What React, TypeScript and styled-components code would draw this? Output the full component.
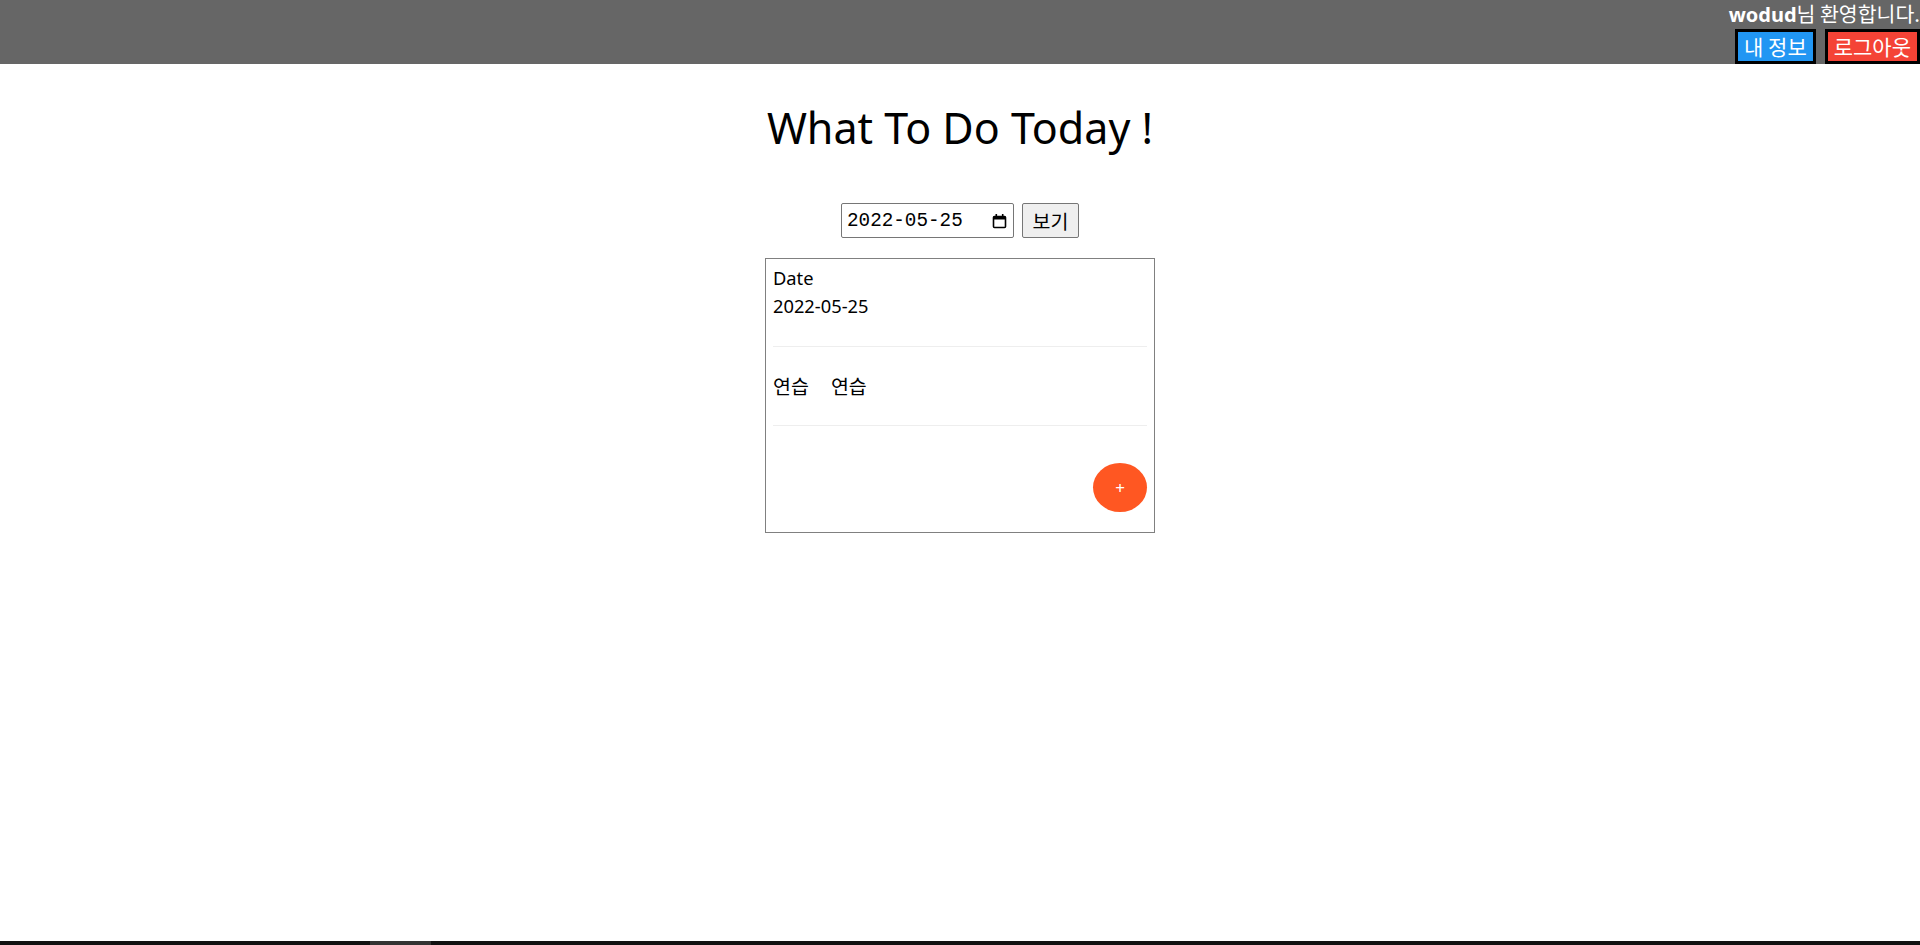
import React from "react";
import styled, { createGlobalStyle } from "styled-components";

const Global = createGlobalStyle`
  html, body { margin: 0; padding: 0; background: #fff; }
  body { font-family: "Noto Sans", "Noto Sans CJK KR", sans-serif; color: #000; }
  * { box-sizing: border-box; }
`;

const Page = styled.div`
  min-height: 945px;
  display: flex;
  flex-direction: column;
`;

const Header = styled.header`
  height: 64px;
  background: #666666;
  display: flex;
  flex-direction: column;
  align-items: flex-end;
`;

const Welcome = styled.div`
  color: #fff;
  font-size: 20.5px;
  line-height: 26px;
  height: 29px;
  white-space: nowrap;
  font-family: "Noto Sans CJK KR", sans-serif;
  b { font-family: "Noto Sans", sans-serif; font-weight: 700; font-size: 20px; }
`;

const HeaderActions = styled.div`
  display: flex;
  gap: 9px;
`;

const HeaderButton = styled.button<{ $bg: string }>`
  height: 35px;
  padding: 0 6px;
  border: 3px solid #000;
  background: ${(p) => p.$bg};
  color: #fff;
  font-family: "Noto Sans CJK KR", sans-serif;
  font-size: 21px;
  line-height: 1;
  cursor: pointer;
`;

const Main = styled.main`
  display: flex;
  flex-direction: column;
  align-items: center;
`;

const Title = styled.h1`
  margin: 34px 0 0;
  font-weight: 400;
  font-size: 43px;
  line-height: 60px;
  font-family: "Noto Sans", "Noto Sans CJK KR", sans-serif;
`;

const SearchRow = styled.form`
  margin-top: 45px;
  display: flex;
  gap: 8px;
  align-items: center;
`;

const DateField = styled.label`
  width: 173px;
  height: 35px;
  border: 1px solid #767676;
  border-radius: 2px;
  padding: 0 6px 0 5px;
  display: flex;
  align-items: center;
  justify-content: space-between;
  background: #fff;
`;

const DateText = styled.input`
  width: 125px;
  border: none;
  outline: none;
  padding: 0;
  font-family: "Liberation Mono", monospace;
  font-size: 19.3px;
  color: #000;
  background: transparent;
`;

const CalendarIcon = styled.svg`
  width: 15px;
  height: 16px;
  flex: none;
`;

const ViewButton = styled.button`
  width: 57px;
  height: 35px;
  border: 1px solid #767676;
  border-radius: 2px;
  background: #efefef;
  font-family: "Noto Sans CJK KR", sans-serif;
  font-size: 19.5px;
  color: #000;
  padding: 0;
`;

const Card = styled.section`
  margin-top: 20px;
  width: 390px;
  border: 1px solid #808080;
  padding: 5px 7px 20px;
  display: flex;
  flex-direction: column;
`;

const CardHead = styled.div`
  font-size: 18.3px;
  line-height: 28px;
  padding-bottom: 26px;
  border-bottom: 1px solid #eeeeee;
  font-family: "Noto Sans", "Noto Sans CJK KR", sans-serif;
`;

const TodoRow = styled.div`
  display: flex;
  gap: 22px;
  padding: 25px 0;
  font-size: 19.5px;
  line-height: 28px;
  border-bottom: 1px solid #eeeeee;
  font-family: "Noto Sans CJK KR", sans-serif;
`;

const FabRow = styled.div`
  display: flex;
  justify-content: flex-end;
  margin-top: 37px;
`;

const Fab = styled.button`
  width: 54px;
  height: 49px;
  border-radius: 50%;
  border: none;
  background: #ff5722;
  color: #fff;
  font-size: 17px;
  line-height: 1;
  padding: 0;
  font-family: "Noto Sans", sans-serif;
  cursor: pointer;
`;

const BottomStrip = styled.div`
  position: fixed;
  left: 0;
  right: 0;
  bottom: 0;
  height: 4px;
  background: #111111;
`;

const StripThumb = styled.div`
  margin-left: 370px;
  width: 61px;
  height: 4px;
  background: #333333;
`;

export default function App() {
  return (
    <Page>
      <Global />
      <Header>
        <Welcome>
          <b>wodud</b>님 환영합니다.
        </Welcome>
        <HeaderActions>
          <HeaderButton $bg="#2196f3">내 정보</HeaderButton>
          <HeaderButton $bg="#f44336">로그아웃</HeaderButton>
        </HeaderActions>
      </Header>
      <Main>
        <Title>What To Do Today !</Title>
        <SearchRow onSubmit={(e) => e.preventDefault()}>
          <DateField>
            <DateText type="text" defaultValue="2022-05-25" />
            <CalendarIcon viewBox="0 0 15 16">
              <rect x="1.5" y="3.5" width="12" height="11" fill="none" stroke="#000" strokeWidth="1.6" rx="1" />
              <rect x="1.5" y="3.5" width="12" height="3" fill="#000" />
              <rect x="3.5" y="1" width="1.6" height="3" fill="#000" />
              <rect x="9.9" y="1" width="1.6" height="3" fill="#000" />
            </CalendarIcon>
          </DateField>
          <ViewButton type="submit">보기</ViewButton>
        </SearchRow>
        <Card>
          <CardHead>
            Date
            <br />
            2022-05-25
          </CardHead>
          <TodoRow>
            <span>연습</span>
            <span>연습</span>
          </TodoRow>
          <FabRow>
            <Fab>+</Fab>
          </FabRow>
        </Card>
      </Main>
      <BottomStrip>
        <StripThumb />
      </BottomStrip>
    </Page>
  );
}
